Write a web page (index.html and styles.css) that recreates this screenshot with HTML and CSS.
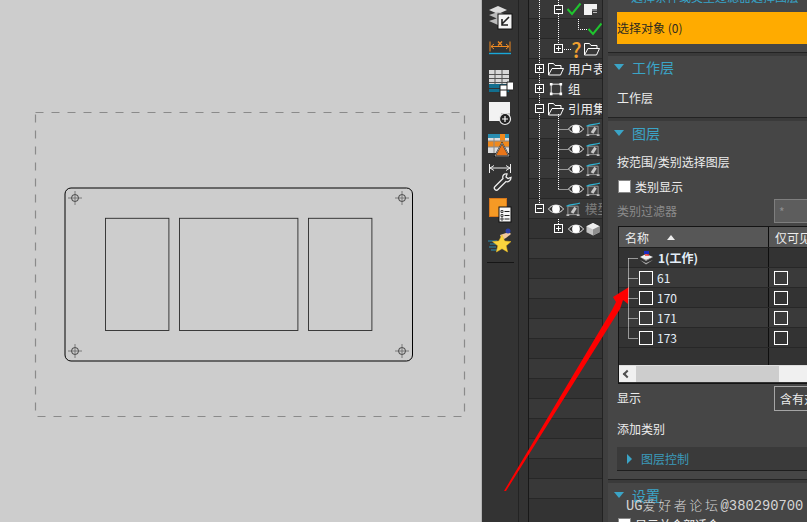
FILE: index.html
```html
<!DOCTYPE html>
<html lang="zh">
<head>
<meta charset="utf-8">
<title>UG</title>
<link rel="stylesheet" href="styles.css">
</head>
<body>
<svg class="defs" aria-hidden="true">
  <symbol id="plus" viewBox="0 0 9 9"><rect x=".5" y=".5" width="8" height="8" fill="#333" stroke="#fff"/><path d="M2 4.500h5M4.500 2v5" stroke="#fff"/></symbol>
  <symbol id="minus" viewBox="0 0 9 9"><rect x=".5" y=".5" width="8" height="8" fill="#333" stroke="#fff"/><path d="M2 4.500h5" stroke="#fff"/></symbol>
  <symbol id="folder" viewBox="0 0 16 14"><path d="M.5 13V1.500h5l1.500 2h6v3M.5 13h12l3-6.500H4z" fill="none" stroke="#fff"/></symbol>
  <symbol id="check" viewBox="0 0 16 14"><path d="M1.500 7l4.500 5L14.500 1.500" fill="none" stroke="#1fc52e" stroke-width="2"/></symbol>
  <symbol id="eye" viewBox="0 0 16 12"><path d="M.5 6C4 .8 12 .8 15.500 6 12 11.200 4 11.200.5 6z" fill="#333" stroke="#eee"/><circle cx="8" cy="6" r="3.900" fill="#fff"/></symbol>
  <symbol id="face" viewBox="0 0 16 15"><path d="M2.500 4.500h11v9h-11z" fill="#444" stroke="#999"/><path d="M5.500 11l4-6 2.500 2-3.500 5.500z" fill="#c8c8c8"/><path d="M1 4.500C5 2 11 3 15.500 1" fill="none" stroke="#2fb6d6" stroke-width="1.200"/><path d="M1 13h3v2H1zM12 13h3v2h-3z" fill="#bbb"/></symbol>
</svg>

<main class="app">
  <section class="canvas">
    <svg class="drawing" viewBox="0 0 481 522" width="481" height="522" role="img" aria-label="drawing">
      <rect x="35.500" y="112.500" width="429" height="304" fill="none" stroke="#8a8a8a" stroke-width="1.200" stroke-dasharray="8 8"/>
      <rect x="65" y="188" width="347.500" height="173" rx="6" fill="none" stroke="#000"/>
      <g fill="none" stroke="#2a2a2a" stroke-width=".9">
        <rect x="105.500" y="218.300" width="63.400" height="112.200"/>
        <rect x="179.500" y="218.300" width="118.400" height="112.200"/>
        <rect x="308.500" y="218.300" width="63.400" height="112.200"/>
      </g>
      <g fill="none" stroke="#222" stroke-width=".8">
        <g id="cross"><circle cx="75" cy="198" r="3.500"/><path d="M68 198h14M75 191v14" stroke="#666"/></g>
        <use href="#cross" x="327"/>
        <use href="#cross" y="153"/>
        <use href="#cross" x="327" y="153"/>
      </g>
    </svg>
  </section>

  <nav class="toolbar">
    <div class="tool"><svg viewBox="0 0 26 32"><path d="M2 9l9-4 9 4-9 4z" fill="#ddd"/><path d="M2 14l9 4 9-4-9-3zM2 20l9 4 9-4-9-3z" fill="#bbb"/><rect x="11" y="13" width="14" height="15" fill="#f5f5f5" stroke="#111"/><path d="M22 16l-7 7M15 18v6h6" fill="none" stroke="#222" stroke-width="1.600"/></svg></div>
    <div class="tool"><svg viewBox="0 0 26 32"><path d="M3 8.500v10M23 8.500v10M4 13.500h18M4 13.500l3-2.500M4 13.500l3 2.500M22 13.500l-3-2.500M22 13.500l-3 2.500" fill="none" stroke="#ef8a22"/><path d="M11 8.500l4 4M15 8.500l-4 4" stroke="#ef8a22" stroke-width="1.300"/><path d="M2 20.500h22" stroke="#19a7d8" stroke-width="1.400"/></svg></div>
    <div class="tool"><svg viewBox="0 0 26 32"><path d="M2 5h20v17H2z" fill="#d8d8d8"/><path d="M2 9.500h20M2 13.500h20M2 17.500h20M8 5v17M15 5v17" stroke="#555"/><path d="M2 19h20v4H2zM2 24h20v3H2z" fill="#126f8f"/><path d="M13 20h7v-3h7v8h-7v7h-7v-12z" fill="#fff" stroke="#222"/><path d="M20 20v5h-7" fill="none" stroke="#222"/></svg></div>
    <div class="tool"><svg viewBox="0 0 26 32"><path d="M2 5h21v15H15v4H2z" fill="#f2f2f2"/><path d="M14 17h9M18 17v5" stroke="#888"/><circle cx="18" cy="22" r="5.500" fill="#222" stroke="#eee" stroke-width="1.200"/><path d="M15 22h6M18 19v6" stroke="#fff" stroke-width="1.200"/></svg></div>
    <div class="tool"><svg viewBox="0 0 26 32"><path d="M1 5h21v19H1z" fill="#ddd"/><path d="M1 5h21v4H1z" fill="#2a8db0"/><path d="M1 12h21v6H1zM13 5h5v19h-5z" fill="#f08a1e"/><path d="M1 12h21M1 18h21M7 9v15" stroke="#888"/><path d="M15 14l7 13H8z" fill="#e8751a" stroke="#111" stroke-width="1.500"/><path d="M15 14l7 13H8z" fill="none" stroke="#ddd" stroke-width=".6"/></svg></div>
    <div class="tool"><svg viewBox="0 0 26 32"><path d="M2.500 3v9M23.500 3v9M3 7h20M3 7l4-2.500M3 7l4 2.500M23 7l-4-2.500M23 7l-4 2.500" fill="none" stroke="#eee"/><path d="M20 13l-1 3 2 1.500 3-1c0 3-3 5-5 4l-8 8c-2 2-5-1-3-3l8-8c-1-3 1-5 4-4.500z" fill="none" stroke="#eee" stroke-width="1.300"/></svg></div>
    <div class="tool"><svg viewBox="0 0 26 32"><rect x="2.500" y="5.500" width="17" height="18" fill="#f59a25" stroke="#d9771a"/><rect x="12" y="14" width="12" height="15" fill="#f7f7f7" stroke="#111"/><path d="M14 17.500h2v2h-2zM14 21.500h2v2h-2zM14 25h2v2h-2z" fill="none" stroke="#222" stroke-width=".8"/><path d="M17.500 18.500h5M17.500 22.500h5M17.500 26h5" stroke="#222"/></svg></div>
    <div class="tool"><svg viewBox="0 0 26 32"><path d="M13 10l9-3 2 2-5 4-4 2z" fill="#f0c8a0"/><circle cx="21" cy="6" r="2.500" fill="#2b3fa8"/><path d="M1 16h9M3 19h7M2 22h7M4 25h6" stroke="#2a8db0"/><path d="M15 10l2.700 6 6.300.600-4.800 4.200 1.400 6.200-5.600-3.300-5.600 3.300 1.400-6.200L5.500 16.600l6.300-.600z" fill="#fad53e" stroke="#e9b820" stroke-width=".5"/></svg></div>
    <div class="tool-rule"></div>
  </nav>

  <div class="strip"></div>

  <section class="tree">
    <svg class="tree-lines" viewBox="0 0 73 240" width="73" height="240" aria-hidden="true">
      <path d="M10.500 0v205M29.500 0v45M33 49.500h9M49.500 19v10.500h9M29.500 114v75.500M29.500 129.500h10M29.500 149.500h10M29.500 169.500h10M29.500 189.500h10M29.500 219v6" fill="none" stroke="#fff" stroke-dasharray="1 1"/>
    </svg>
    <div class="node first in1"><svg class="box"><use href="#minus"/></svg><svg class="ic chk"><use href="#check"/></svg><svg class="sheet" viewBox="0 0 13 11"><path d="M0 0h13v5H8v6H0z" fill="#f2f2f2"/><path d="M8 6h5M9 8.500h4" stroke="#bbb"/></svg></div>
    <div class="node alt in2"><svg class="ic chk"><use href="#check"/></svg></div>
    <div class="node in1"><svg class="box"><use href="#plus"/></svg><span class="quest">?</span><svg class="ic fold"><use href="#folder"/></svg></div>
    <div class="node alt in0"><svg class="box"><use href="#plus"/></svg><svg class="ic"><use href="#folder"/></svg><span class="label">用户表</span></div>
    <div class="node in0"><svg class="box"><use href="#plus"/></svg><svg class="ic" viewBox="0 0 16 16"><path d="M2.500 2.500h11v11h-11z" fill="none" stroke="#fff"/><path d="M1 1h3v3H1zM12 1h3v3h-3zM1 12h3v3H1zM12 12h3v3h-3z" fill="#fff"/></svg><span class="label">组</span></div>
    <div class="node alt in0"><svg class="box"><use href="#minus"/></svg><svg class="ic"><use href="#folder"/></svg><span class="label">引用集</span></div>
    <div class="node in3"><svg class="ic eye"><use href="#eye"/></svg><svg class="ic fc"><use href="#face"/></svg></div>
    <div class="node alt in3"><svg class="ic eye"><use href="#eye"/></svg><svg class="ic fc"><use href="#face"/></svg></div>
    <div class="node in3"><svg class="ic eye"><use href="#eye"/></svg><svg class="ic fc"><use href="#face"/></svg></div>
    <div class="node alt in3"><svg class="ic eye"><use href="#eye"/></svg><svg class="ic fc"><use href="#face"/></svg></div>
    <div class="node in0"><svg class="box"><use href="#minus"/></svg><svg class="ic"><use href="#eye"/></svg><svg class="ic fc"><use href="#face"/></svg><span class="label dim">模型</span></div>
    <div class="node alt in1"><svg class="box"><use href="#plus"/></svg><svg class="ic cube-eye"><use href="#eye"/></svg><svg class="ic fc" viewBox="0 0 16 15"><path d="M8 1l7 3.500v6.500L8 14.500 1 11V4.500z" fill="#c4c4c4"/><path d="M1 4.500L8 8l7-3.500L8 1z" fill="#eee"/><path d="M8 8v6.500l7-3.500V4.500z" fill="#8e8e8e"/></svg></div>
    <div class="node"></div><div class="node alt"></div><div class="node"></div><div class="node alt"></div><div class="node"></div><div class="node alt"></div><div class="node"></div><div class="node alt"></div><div class="node"></div><div class="node alt"></div><div class="node"></div><div class="node alt"></div><div class="node"></div>
  </section>

  <div class="sash"></div>

  <aside class="panel">
    <section class="card card-top">
      <div class="clipped-head"><span>选择条件或类型过滤器选择图层</span></div>
      <div class="selected">选择对象 (0)</div>
    </section>

    <section class="card card-work">
      <h2 class="head"><span class="tri"></span>工作层</h2>
      <div class="field">工作层</div>
    </section>

    <section class="card card-layer">
      <h2 class="head"><span class="tri"></span>图层</h2>
      <div class="field sel-scope">按范围/类别选择图层</div>
      <label class="field chk-row"><span class="white-box"></span>类别显示</label>
      <div class="field split filter"><span class="muted raised">类别过滤器</span><span class="input">*</span></div>

      <div class="table">
        <svg class="table-lines" viewBox="0 0 30 120" width="30" height="120" aria-hidden="true">
          <path d="M9.500 31.500v80M9.500 31.500h10M9.500 51.500h10M9.500 71.500h10M9.500 91.500h10M9.500 111.500h10" fill="none" stroke="#fff" stroke-dasharray="1 1"/>
        </svg>
        <div class="thead"><span class="col-a">名称<i class="sort"></i></span><span class="col-b">仅可见</span></div>
        <div class="tr"><span class="col-a"><svg class="stack" viewBox="0 0 15 14"><path d="M1 6l6-3 7 3-7 3z" fill="#eee"/><path d="M1 9l6 3 7-3-7 4.500zM1 6l6 3 7-3-7 4z" fill="#aaa"/><path d="M5 0h5v3H5z" fill="#1a2cc0"/><path d="M6 4h4" stroke="#e33" stroke-width="1.500"/></svg><b>1(工作)</b></span><span class="col-b"></span></div>
        <div class="tr alt"><span class="col-a"><i class="cb"></i>61</span><span class="col-b"><i class="cb"></i></span></div>
        <div class="tr"><span class="col-a"><i class="cb"></i>170</span><span class="col-b"><i class="cb"></i></span></div>
        <div class="tr alt"><span class="col-a"><i class="cb"></i>171</span><span class="col-b"><i class="cb"></i></span></div>
        <div class="tr"><span class="col-a"><i class="cb"></i>173</span><span class="col-b"><i class="cb"></i></span></div>
        <div class="tr-fill"><span class="col-a"></span><span class="col-b"></span></div>
        <div class="scrollbar"><span class="arrow"></span><span class="thumb"></span></div>
      </div>

      <div class="field split show"><span class="raised">显示</span><span class="select">含有对象</span></div>
      <div class="field add">添加类别</div>
      <div class="subhead"><span class="tri-r"></span>图层控制</div>
    </section>

    <section class="card card-set">
      <h2 class="head"><span class="tri"></span>设置</h2>
      <label class="field chk-row low"><span class="white-box"></span>显示并合部适合</label>
    </section>
  </aside>

  <svg class="arrow-mark" viewBox="0 0 807 522" width="807" height="522" aria-hidden="true">
    <polygon points="504,491 612,310 616,302 613,297 629,287 628,304 623,300 620,309 506,491" fill="#fe0000"/>
  </svg>
  <div class="watermark">UG<span class="wm-cjk">爱好者论坛</span>@380290700</div>
</main>
</body>
</html>
```
FILE: styles.css
```css
* { box-sizing: border-box; }
html, body { margin: 0; padding: 0; }
body {
  width: 807px;
  height: 522px;
  overflow: hidden;
  font-family: "Noto Sans CJK SC", "Noto Sans", sans-serif;
  font-size: 12px;
  color: #ececec;
  background: #3c3c3c;
}
.defs { position: absolute; width: 0; height: 0; }
.app {
  position: relative;
  display: grid;
  grid-template-columns: 482px 37px 10px 74px 5px 199px;
  width: 807px;
  height: 522px;
  overflow: hidden;
}

/* canvas */
.canvas { background: #cdcdcd; border-right: 1px solid #b4b4b4; }
.drawing { display: block; }

/* toolbar */
.toolbar {
  display: flex;
  flex-direction: column;
  padding: 1px 0 0 5px;
  background: #333;
  border-right: 1px solid #232323;
}
.tool { height: 32px; }
.tool svg { display: block; width: 26px; height: 32px; }
.tool-rule { width: 27px; height: 1px; margin-top: 5px; background: #161616; }
.strip { background: #333; border-right: 1px solid #181818; }

/* tree */
.tree {
  position: relative;
  display: flex;
  flex-direction: column;
  overflow: hidden;
  background: #333;
  border-right: 1px solid #222;
}
.tree-lines { position: absolute; left: 0; top: 0; z-index: 2; }
.node {
  position: relative;
  flex: none;
  display: flex;
  align-items: center;
  height: 20px;
  background: #383838;
  border-bottom: 1px solid #272727;
  white-space: nowrap;
}
.node.first { height: 19px; }
.node.alt { background: #333; }
.in0 { padding-left: 6px; }
.in1 { padding-left: 25px; }
.in2 { padding-left: 55px; }
.in3 { padding-left: 39px; }
.box { width: 9px; height: 9px; flex: none; position: relative; z-index: 3; }
.ic { width: 16px; height: 14px; flex: none; margin-left: 4px; }
.in3 .eye { margin-left: 0; }
.fc { margin-left: 1px; }
.chk { margin-left: 3px; }
.cube-eye { margin-left: 5px; }
.sheet { width: 13px; height: 11px; margin-left: 2px; flex: none; }
.quest { margin-left: 8px; width: 11px; font-size: 21px; line-height: 20px; font-weight: 500; color: #f0a030; text-align: center; }
.fold { margin-left: 2px; }
.label { margin-left: 4px; font-size: 12.500px; line-height: 16px; }
.dim { color: #7c7c7c; }

/* sash and panel */
.sash { background: #3f3f3f; }
.panel { display: flex; flex-direction: column; background: #3a3a3a; }
.card { flex: none; background: #464646; border-bottom: 1px solid #232323; overflow: hidden; padding-left: 9px; }
.card-top { height: 53px; }
.card-work { height: 62px; margin-top: 3px; }
.card-layer { height: 359px; margin-top: 3px; }
.card-set { flex: 1; margin-top: 3px; border-bottom: 0; }
.clipped-head { display: flex; align-items: flex-end; height: 3px; padding-left: 14px; margin-bottom: 9px; overflow: hidden; font-size: 12px; line-height: 12px; color: #36a3c7; white-space: nowrap; }
.clipped-head span { flex: none; }
.selected { height: 32px; background: #ffab00; color: #2c2a20; font-size: 12px; line-height: 32px; white-space: nowrap; }
.head {
  display: flex;
  align-items: center;
  height: 22px;
  margin: 0 0 0 -3px;
  font-size: 14px;
  font-weight: 400;
  color: #3ba4c6;
}
.card-layer .head, .card-set .head { margin-top: 1px; }
.tri { width: 0; height: 0; margin-right: 8px; border: 5.500px solid transparent; border-top: 6px solid #3ba4c6; border-bottom: 0; }
.field { display: flex; align-items: center; height: 20px; white-space: nowrap; }
.card-work .field { margin-top: 9px; }
.sel-scope { margin-top: 7px; }
.chk-row { height: 20px; margin-top: 5px; }
.white-box { width: 13px; height: 13px; margin: 0 4px 0 1px; background: #fff; border: 1px solid #888; flex: none; }
.split { justify-content: space-between; }
.filter { height: 24px; margin-top: 3px; }
.raised { padding-bottom: 2px; }
.muted { color: #8b8b8b; }
.input { width: 33px; height: 24px; padding: 3px 0 0 4px; background: #5d5d5d; border: 1px solid #7e7e7e; border-right: 0; color: #8e8e8e; }

/* table */
.table {
  position: relative;
  height: 158px;
  margin: 3px 0 0 1px;
  background: #333;
  border: 1px solid #141414;
  border-right: 0;
  overflow: hidden;
}
.table-lines { position: absolute; left: 0; top: 0; z-index: 2; }
.thead, .tr, .tr-fill { display: grid; grid-template-columns: 150px 1fr; }
.thead { height: 21px; line-height: 19px; background: #575757; border-bottom: 1px solid #202020; }
.col-a, .col-b { display: flex; align-items: center; }
.col-a { border-right: 1px solid #0e0e0e; }
.thead .col-a { padding-left: 6px; }
.thead .col-b { padding-left: 6px; white-space: nowrap; }
.sort { width: 0; height: 0; margin-left: 18px; border: 4.500px solid transparent; border-bottom: 5px solid #eee; border-top: 0; }
.tr { height: 20px; background: #333; border-bottom: 1px solid #272727; color: #e4eef8; }
.tr.alt { background: #3a3a3a; }
.tr .col-a { padding-left: 20px; }
.tr .col-b { padding-left: 5px; }
.tr b { margin-left: 4px; font-weight: 700; }
.stack { width: 15px; height: 14px; flex: none; }
.cb { width: 14px; height: 14px; flex: none; margin-right: 4px; border: 1px solid #fff; }
.tr-fill { height: 17px; }
.scrollbar { display: flex; align-items: center; height: 17px; background: #f0f0f0; border-top: 1px solid #dedede; }
.arrow { width: 6px; height: 6px; margin: 0 6px 0 5px; border-left: 2px solid #505050; border-bottom: 2px solid #505050; transform: rotate(45deg); }
.thumb { width: 143px; height: 100%; background: #cdcdcd; }

.show { height: 25px; margin-top: 2px; }
.select { width: 33px; height: 25px; padding-left: 5px; line-height: 23px; background: #444; border: 1px solid #a5a5a5; border-right: 0; overflow: hidden; }
.add { height: 20px; margin-top: 7px; }
.subhead {
  display: flex;
  align-items: center;
  height: 24px;
  margin-top: 9px;
  background: #3a3a3a;
  border-bottom: 1px solid #1e1e1e;
  color: #3a9bbb;
}
.tri-r { width: 0; height: 0; margin: 0 9px 0 10px; border: 5px solid transparent; border-left: 5px solid #3ba4c6; border-right: 0; }
.low { margin-top: 8px; }

/* overlays */
.arrow-mark { position: absolute; left: 0; top: 0; pointer-events: none; }
.watermark {
  position: absolute;
  left: 626px;
  top: 497px;
  font-family: "Liberation Mono", monospace;
  font-size: 13.800px;
  line-height: 16px;
  color: #d4d4d4;
  white-space: nowrap;
}
.wm-cjk { font-family: "Noto Sans CJK SC", sans-serif; font-size: 13px; letter-spacing: 2.600px; font-weight: 300; }
```
